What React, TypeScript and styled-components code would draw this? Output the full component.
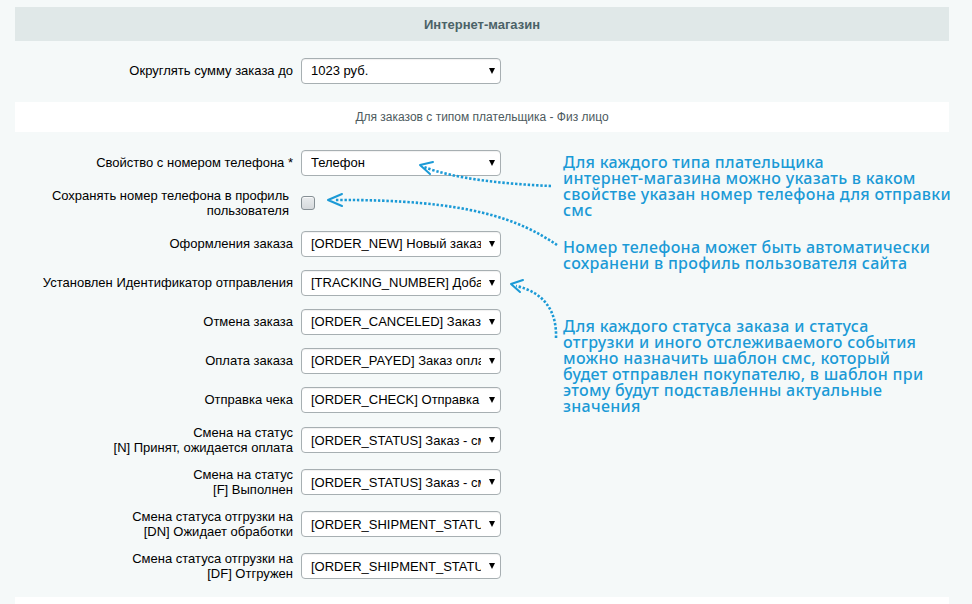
import React from "react";
import styled, { createGlobalStyle } from "styled-components";

const GlobalStyle = createGlobalStyle`
  html, body {
    margin: 0;
    padding: 0;
    background: #f5f9f9;
  }
  body {
    font-family: "Liberation Sans", Arial, sans-serif;
  }
`;

const Page = styled.div`
  position: relative;
  width: 972px;
  height: 604px;
  overflow: hidden;
  padding: 7px 23px 0 15px;
  box-sizing: border-box;
`;

const SectionTitle = styled.div`
  height: 34px;
  margin-bottom: 10px;
  background: #e0e8e8;
  display: flex;
  align-items: center;
  justify-content: center;
  font-size: 13px;
  font-weight: bold;
  color: #4b6267;
`;

const SubTitle = styled.div`
  height: 30px;
  margin: 12px 0 11px;
  background: #fff;
  display: flex;
  align-items: center;
  justify-content: center;
  font-size: 12px;
  color: #4d5a5e;
`;

const Footer = styled.div`
  height: 30px;
  margin-top: 10px;
  background: #fff;
`;

const Form = styled.div`
  display: flex;
  flex-direction: column;
`;

const Row = styled.div`
  display: grid;
  grid-template-columns: 278px 200px;
  column-gap: 8px;
  align-items: center;
  min-height: 39px;
  padding: 6px 0;
  box-sizing: border-box;
`;

const Label = styled.div<{ $inset?: number }>`
  text-align: right;
  font-size: 13px;
  line-height: 15px;
  color: #000;
  padding-right: ${(p) => p.$inset || 0}px;
`;

const Select = styled.div`
  width: 200px;
  height: 26px;
  box-sizing: border-box;
  display: flex;
  align-items: center;
  padding: 0 5px 0 9px;
  background: #fff;
  border: 1px solid #a7afb2;
  border-radius: 4px;
  box-shadow: inset 0 1px 1px rgba(0, 0, 0, 0.06);
  font-size: 13px;
  color: #000;
`;

const SelectText = styled.span`
  flex: 1;
  overflow: hidden;
  white-space: nowrap;
`;

const Caret = styled.span`
  margin-left: 8px;
  width: 0;
  height: 0;
  border-left: 3.5px solid transparent;
  border-right: 3.5px solid transparent;
  border-top: 6px solid #000;
`;

const Checkbox = styled.span`
  display: block;
  width: 14px;
  height: 14px;
  box-sizing: border-box;
  border: 1px solid #858f94;
  border-radius: 3px;
  background: linear-gradient(#e9ecee, #d5d9dc);
  box-shadow: inset 0 1px 0 rgba(255, 255, 255, 0.7);
`;

const Note = styled.div<{ $top: number }>`
  position: absolute;
  left: 563px;
  top: ${(p) => p.$top}px;
  font-family: "Noto Sans", "DejaVu Sans", sans-serif;
  font-size: 16px;
  font-weight: 500;
  letter-spacing: 0.3px;
  line-height: 16px;
  color: #1b9ad6;
  white-space: nowrap;
`;

const Arrows = styled.svg`
  position: absolute;
  left: 0;
  top: 0;
  pointer-events: none;
`;

type Field = {
  label: string[];
  value?: string;
  checkbox?: boolean;
  inset?: number;
};

const fields: Field[] = [
  { label: ["Свойство с номером телефона *"], value: "Телефон" },
  { label: ["Сохранять номер телефона в профиль", "пользователя"], checkbox: true, inset: 4 },
  { label: ["Оформления заказа"], value: "[ORDER_NEW] Новый заказ" },
  { label: ["Установлен Идентификатор отправления"], value: "[TRACKING_NUMBER] Добавлен" },
  { label: ["Отмена заказа"], value: "[ORDER_CANCELED] Заказ отменён" },
  { label: ["Оплата заказа"], value: "[ORDER_PAYED] Заказ оплачен" },
  { label: ["Отправка чека"], value: "[ORDER_CHECK] Отправка чека" },
  { label: ["Смена на статус", "[N] Принят, ожидается оплата"], value: "[ORDER_STATUS] Заказ - смена статуса" },
  { label: ["Смена на статус", "[F] Выполнен"], value: "[ORDER_STATUS] Заказ - смена статуса" },
  { label: ["Смена статуса отгрузки на", "[DN] Ожидает обработки"], value: "[ORDER_SHIPMENT_STATUS]" },
  { label: ["Смена статуса отгрузки на", "[DF] Отгружен"], value: "[ORDER_SHIPMENT_STATUS]" },
];

const notes = [
  {
    top: 154,
    lines: [
      "Для каждого типа плательщика",
      "интернет-магазина можно указать в каком",
      "свойстве указан номер телефона для отправки",
      "смс",
    ],
  },
  {
    top: 239,
    lines: ["Номер телефона может быть автоматически", "сохранени в профиль пользователя сайта"],
  },
  {
    top: 318,
    lines: [
      "Для каждого статуса заказа и статуса",
      "отгрузки и иного отслеживаемого события",
      "можно назначить шаблон смс, который",
      "будет отправлен покупателю, в шаблон при",
      "этому будут подставленны актуальные",
      "значения",
    ],
  },
];

const Lines = ({ lines }: { lines: string[] }) => (
  <>
    {lines.map((l, i) => (
      <React.Fragment key={i}>
        {i > 0 && <br />}
        {l}
      </React.Fragment>
    ))}
  </>
);

const Dropdown = ({ value }: { value: string }) => (
  <Select>
    <SelectText>{value}</SelectText>
    <Caret />
  </Select>
);

const BLUE = "#1b9ad6";

export default function App() {
  return (
    <>
      <GlobalStyle />
      <Page>
        <SectionTitle>Интернет-магазин</SectionTitle>
        <Row>
          <Label>Округлять сумму заказа до</Label>
          <Dropdown value="1023 руб." />
        </Row>
        <SubTitle>Для заказов с типом плательщика - Физ лицо</SubTitle>
        <Form>
          {fields.map((f, i) => (
            <Row key={i}>
              <Label $inset={f.inset}>
                <Lines lines={f.label} />
              </Label>
              {f.checkbox ? <Checkbox /> : <Dropdown value={f.value || ""} />}
            </Row>
          ))}
        </Form>
        <Footer />

        {notes.map((n, i) => (
          <Note key={i} $top={n.top}>
            <Lines lines={n.lines} />
          </Note>
        ))}

        <Arrows width="972" height="604" viewBox="0 0 972 604">
          <g fill="none" stroke={BLUE} strokeWidth="2.6" strokeDasharray="2.4 1.8">
            <path d="M 551 186 C 505 184, 455 179, 424 167" />
            <path d="M 557 245 C 520 220, 470 199, 334 200" />
            <path d="M 556 338 C 557 310, 543 292, 516 286" />
          </g>
          <g fill="none" stroke={BLUE} strokeWidth="2" strokeLinecap="round" strokeLinejoin="round">
            <path d="M 433 162 L 420 165 L 430 174" />
            <path d="M 342 194 L 328 200 L 342 206" />
            <path d="M 523 280 L 511 284 L 520 292" />
          </g>
        </Arrows>
      </Page>
    </>
  );
}
